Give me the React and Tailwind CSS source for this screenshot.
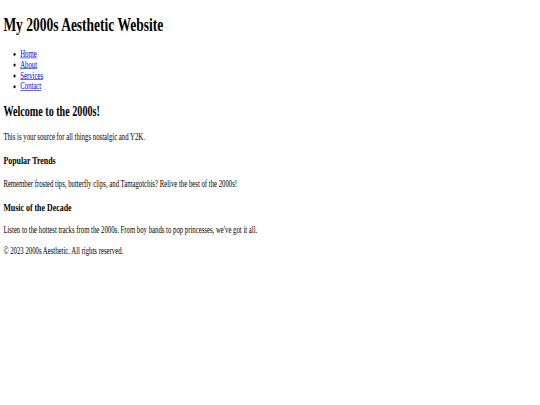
import React from "react";

const links = ["Home", "About", "Services", "Contact"];

const App = () => {
  return (
    <div className="w-full h-screen overflow-hidden bg-white">
      {/* page laid out at 1280 wide, then squeezed like the screenshot */}
      <div className="w-[1280px] px-2 py-px origin-top-left scale-x-[0.421875] scale-y-[0.6] font-['Liberation_Serif','Times_New_Roman',serif] text-[16px] leading-[normal] text-black">
        <header>
          <h1 className="text-[32px] font-bold my-[21.44px]">
            My 2000s Aesthetic Website
          </h1>
          <nav>
            <ul className="list-disc pl-10 my-4">
              {links.map((link) => (
                <li key={link}>
                  <a href="#" className="text-[#0000ee] underline">
                    {link}
                  </a>
                </li>
              ))}
            </ul>
          </nav>
        </header>

        <main>
          <section>
            <h2 className="text-[24px] font-bold my-[19.92px]">
              Welcome to the 2000s!
            </h2>
            <p className="my-4">
              This is your source for all things nostalgic and Y2K.
            </p>
          </section>

          <section>
            <h3 className="text-[18.72px] font-bold my-[18.72px]">
              Popular Trends
            </h3>
            <p className="my-4">
              Remember frosted tips, butterfly clips, and Tamagotchis? Relive
              the best of the 2000s!
            </p>
          </section>

          <section>
            <h3 className="text-[18.72px] font-bold my-[18.72px]">
              Music of the Decade
            </h3>
            <p className="my-4">
              Listen to the hottest tracks from the 2000s. From boy bands to pop
              princesses, we've got it all.
            </p>
          </section>
        </main>

        <footer>
          <p className="my-4">© 2023 2000s Aesthetic. All rights reserved.</p>
        </footer>
      </div>
    </div>
  );
};

export default App;
